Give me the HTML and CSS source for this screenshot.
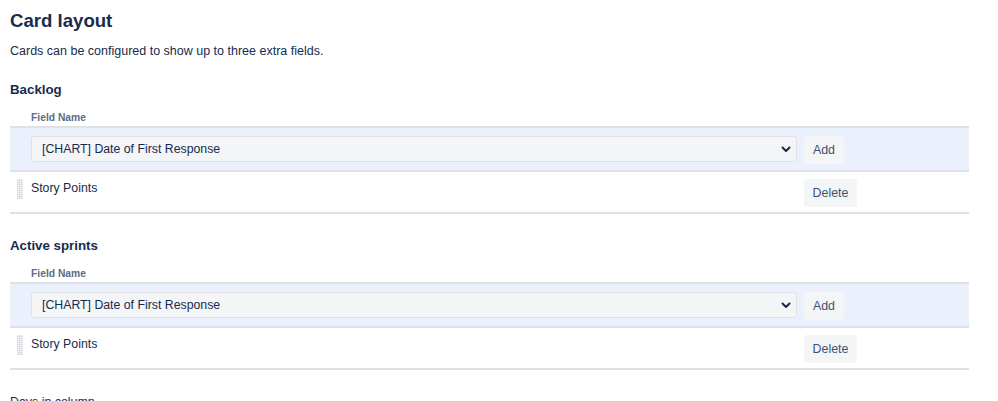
FILE: index.html
```html
<!DOCTYPE html>
<html lang="en">
<head>
<meta charset="utf-8">
<title>Card layout</title>
<link rel="stylesheet" href="styles.css">
</head>
<body>
<main class="page">
  <h1 class="title">Card layout</h1>
  <p class="desc">Cards can be configured to show up to three extra fields.</p>

  <section class="section">
    <h2 class="section-title">Backlog</h2>
    <div class="fields">
      <div class="fields-head">Field Name</div>
      <div class="add-row">
        <div class="select-wrap">
          <select class="select"><option>[CHART] Date of First Response</option></select>
          <svg class="chevron" width="10" height="7" viewBox="0 0 10 7"><path d="M1.5 1.5 L5 5 L8.5 1.5" fill="none" stroke="#172b4d" stroke-width="2" stroke-linecap="round" stroke-linejoin="round"/></svg>
        </div>
        <button class="btn btn-add">Add</button>
      </div>
      <div class="field-row">
        <span class="handle"></span>
        <span class="field-name">Story Points</span>
        <button class="btn btn-delete">Delete</button>
      </div>
    </div>
  </section>

  <section class="section">
    <h2 class="section-title">Active sprints</h2>
    <div class="fields">
      <div class="fields-head">Field Name</div>
      <div class="add-row">
        <div class="select-wrap">
          <select class="select"><option>[CHART] Date of First Response</option></select>
          <svg class="chevron" width="10" height="7" viewBox="0 0 10 7"><path d="M1.5 1.5 L5 5 L8.5 1.5" fill="none" stroke="#172b4d" stroke-width="2" stroke-linecap="round" stroke-linejoin="round"/></svg>
        </div>
        <button class="btn btn-add">Add</button>
      </div>
      <div class="field-row">
        <span class="handle"></span>
        <span class="field-name">Story Points</span>
        <button class="btn btn-delete">Delete</button>
      </div>
    </div>
  </section>

  <section class="section">
    <h2 class="section-label">Days in column</h2>
  </section>
</main>
</body>
</html>
```

FILE: styles.css
```css
html, body {
  margin: 0;
  padding: 0;
  overflow: hidden;
  background: #ffffff;
}

body {
  font-family: "Liberation Sans", Arial, sans-serif;
  color: #172b4d;
}

.page {
  width: 959px;
  padding: 0 10px;
}

.title {
  margin: 9px 0 0;
  font-size: 18.6px;
  line-height: 24px;
  font-weight: bold;
  color: #172b4d;
}

.desc {
  margin: 8px 0 0;
  font-size: 12.5px;
  line-height: 20px;
  color: #172b4d;
}

.section {
  padding-top: 19px;
}

.section + .section {
  padding-top: 22px;
}

.section-title {
  margin: 0;
  font-size: 13.3px;
  line-height: 20px;
  font-weight: bold;
  color: #172b4d;
}

.section-label {
  margin: 0;
  font-size: 12.4px;
  line-height: 20px;
  font-weight: normal;
  color: #172b4d;
}

.fields {
  margin-top: 10px;
}

.fields-head {
  padding: 0 0 0 21px;
  font-size: 10.3px;
  line-height: 16px;
  font-weight: bold;
  color: #5e6c84;
  border-bottom: 2px solid #dfe1e6;
}

.add-row {
  display: flex;
  align-items: flex-start;
  gap: 7px;
  height: 44px;
  box-sizing: border-box;
  padding: 8px 0 0 21px;
  background: #eaf1fd;
  border-bottom: 2px solid #dfe1e6;
}

.select-wrap {
  position: relative;
  width: 766px;
  height: 26px;
}

.select {
  appearance: none;
  -webkit-appearance: none;
  width: 100%;
  height: 26px;
  box-sizing: border-box;
  margin: 0;
  padding: 0 0 0 10px;
  border: 1px solid #dfe1e6;
  border-radius: 3px;
  background: #f4f5f7;
  font-family: "Liberation Sans", Arial, sans-serif;
  font-size: 12.3px;
  color: #172b4d;
}

.chevron {
  position: absolute;
  right: 6px;
  top: 10px;
}

.btn {
  height: 28px;
  box-sizing: border-box;
  margin: 0;
  border: none;
  border-radius: 3px;
  background: #f4f5f7;
  font-family: "Liberation Sans", Arial, sans-serif;
  font-size: 12.4px;
  color: #42526e;
  padding: 0;
}

.btn-add {
  width: 40px;
}

.btn-delete {
  width: 53px;
  margin-top: 7px;
  margin-left: auto;
  margin-right: 112px;
}

.field-row {
  display: flex;
  align-items: flex-start;
  height: 42px;
  box-sizing: border-box;
  padding: 0 0 0 7px;
  border-bottom: 2px solid #dfe1e6;
}

.handle {
  width: 6px;
  height: 20px;
  margin-top: 7px;
  margin-right: 8px;
  background-color: #f7f8f9;
  background-image:
    linear-gradient(90deg, #dcdfe4 1px, transparent 1px),
    linear-gradient(0deg, #dcdfe4 1px, transparent 1px);
  background-size: 2px 2px;
}

.field-name {
  padding-top: 7px;
  font-size: 12.3px;
  line-height: 18px;
  color: #172b4d;
}
```
